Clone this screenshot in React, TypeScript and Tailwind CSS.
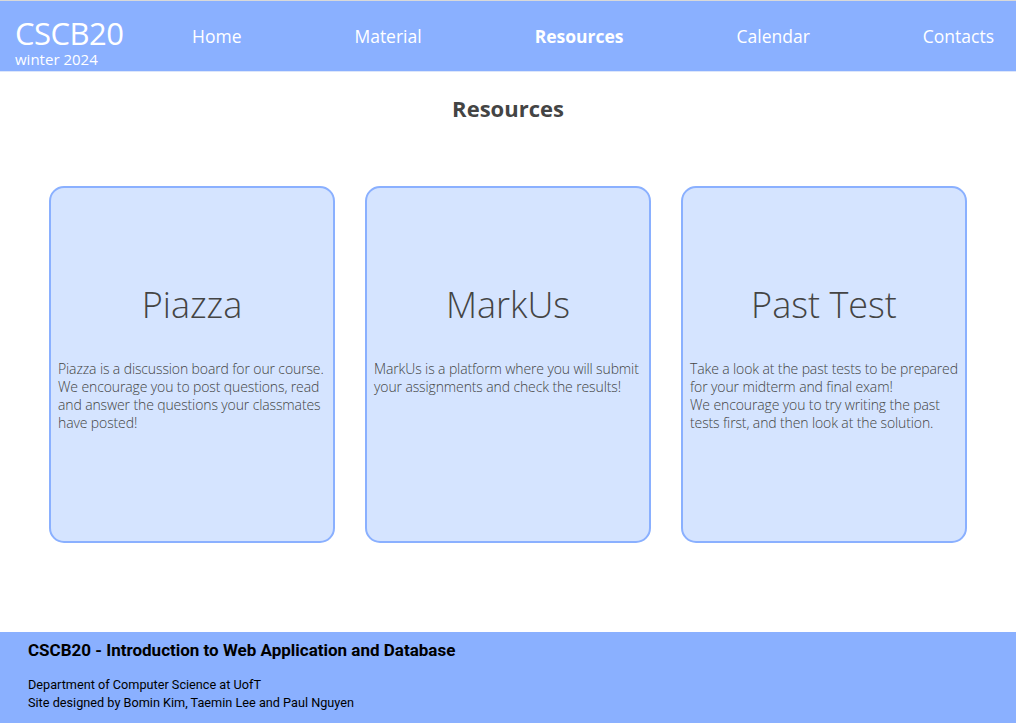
import React from 'react';

const navItems = ['Home', 'Material', 'Resources', 'Calendar', 'Contacts'];

const cards = [
    {
        title: 'Piazza',
        body: ['Piazza is a discussion board for our course. We encourage you to post questions, read and answer the questions your classmates have posted!'],
    },
    {
        title: 'MarkUs',
        body: ['MarkUs is a platform where you will submit your assignments and check the results!'],
    },
    {
        title: 'Past Test',
        body: [
            'Take a look at the past tests to be prepared for your midterm and final exam!',
            'We encourage you to try writing the past tests first, and then look at the solution.',
        ],
    },
];

export default function App() {
    return (
        <div className="min-h-[723px] flex flex-col bg-white font-['Open_Sans',sans-serif]">
            <header className="h-[72px] bg-[#8ab0ff] border-t border-[#d9d9d9] border-b border-b-[#dce6fb] flex items-center">
                <div className="w-[192px] pl-[15px] pt-[12px] text-white">
                    <div className="text-[31px] leading-[30px] tracking-[-0.5px]">CSCB20</div>
                    <div className="text-[15px] leading-[16px] mt-[3px]">winter 2024</div>
                </div>
                <nav className="flex-1 flex justify-between pr-[22px] pt-[1px] text-white text-[17.5px]">
                    {navItems.map((item) => (
                        <a key={item} className={item === 'Resources' ? 'font-bold' : ''}>{item}</a>
                    ))}
                </nav>
            </header>

            <main className="flex-1 flex flex-col items-center">
                <h1 className="mt-[20px] text-[22px] font-bold text-[#444]">Resources</h1>
                <div className="mt-[61px] flex gap-[30px]">
                    {cards.map((card) => (
                        <div key={card.title} className="w-[286px] h-[357px] rounded-[15px] border-2 border-[#8ab0ff] bg-[#d5e4ff] px-[7px]">
                            <h2 className="mt-[99px] text-center text-[36px] font-light text-[#444] leading-none">{card.title}</h2>
                            <div className="mt-[37px] text-[14px] font-light text-[#444] leading-[18px] tracking-[-0.12px]">
                                {card.body.map((p) => (
                                    <p key={p}>{p}</p>
                                ))}
                            </div>
                        </div>
                    ))}
                </div>
            </main>

            <footer className="h-[91px] bg-[#8ab0ff] px-[28px] pt-[6px] font-['Roboto',sans-serif] text-black">
                <div className="text-[17px] font-bold">CSCB20 - Introduction to Web Application and Database</div>
                <div className="mt-[12px] text-[12.7px] leading-[18px]">
                    <p>Department of Computer Science at UofT</p>
                    <p>Site designed by Bomin Kim, Taemin Lee and Paul Nguyen</p>
                </div>
            </footer>
        </div>
    );
}
